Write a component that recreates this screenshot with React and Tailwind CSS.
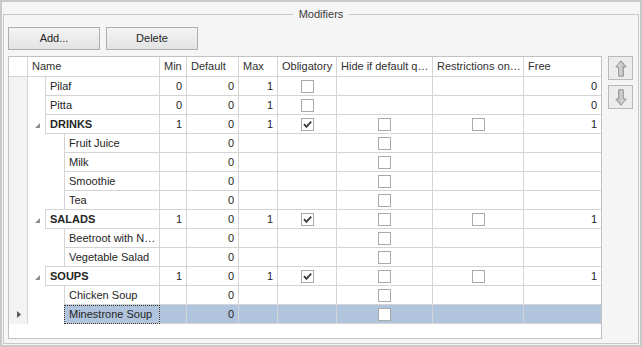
import React from 'react';

const COLS = [19, 132, 27, 52, 39, 59, 96, 91, 77];

const rows = [
  { name: 'Pilaf', level: 0, min: '0', def: '0', max: '1', obl: false, free: '0' },
  { name: 'Pitta', level: 0, min: '0', def: '0', max: '1', obl: false, free: '0' },
  { name: 'DRINKS', level: 0, group: true, min: '1', def: '0', max: '1', obl: true, hide: false, restr: false, free: '1' },
  { name: 'Fruit Juice', level: 1, def: '0', hide: false },
  { name: 'Milk', level: 1, def: '0', hide: false },
  { name: 'Smoothie', level: 1, def: '0', hide: false },
  { name: 'Tea', level: 1, def: '0', hide: false },
  { name: 'SALADS', level: 0, group: true, afterChild: true, min: '1', def: '0', max: '1', obl: true, hide: false, restr: false, free: '1' },
  { name: 'Beetroot with N\u2026', level: 1, def: '0', hide: false },
  { name: 'Vegetable Salad', level: 1, def: '0', hide: false },
  { name: 'SOUPS', level: 0, group: true, afterChild: true, min: '1', def: '0', max: '1', obl: true, hide: false, restr: false, free: '1' },
  { name: 'Chicken Soup', level: 1, def: '0', hide: false },
  { name: 'Minestrone Soup', level: 1, def: '0', hide: false, selected: true },
];

function Check({ checked }) {
  return (
    <span className="w-[13px] h-[13px] border border-[#a9a9a9] bg-white flex items-center justify-center">
      {checked && (
        <svg width="11" height="11" viewBox="0 0 11 11">
          <path d="M2 5.2 L4.4 7.8 L9.2 2.6" fill="none" stroke="#3c3c3c" strokeWidth="1.9" />
        </svg>
      )}
    </span>
  );
}

function Arrow({ down }) {
  return (
    <svg width="12" height="17" viewBox="0 0 12 17" className={down ? 'rotate-180' : ''}>
      <defs>
        <linearGradient id={down ? 'gd' : 'gu'} x1="0" y1="0" x2="1" y2="0">
          <stop offset="0" stopColor="#e4e4e4" />
          <stop offset="1" stopColor="#b4b4b4" />
        </linearGradient>
      </defs>
      <path
        d="M6 0.8 L11.2 7 L8.3 7 L8.3 16.2 L3.7 16.2 L3.7 7 L0.8 7 Z"
        fill={`url(#${down ? 'gd' : 'gu'})`}
        stroke="#8f8f8f"
        strokeWidth="1"
        strokeLinejoin="round"
      />
    </svg>
  );
}

function NumCell({ w, val, sel, last }) {
  return (
    <div
      className={`h-[19px] border-b border-[#d4d4d4] flex items-center justify-end pr-[4px] ${last ? '' : 'border-r'} ${sel ? 'bg-[#b0c4de]' : ''}`}
      style={{ width: w }}
    >
      {val}
    </div>
  );
}

function CheckCell({ w, val, sel }) {
  return (
    <div
      className={`h-[19px] border-b border-r border-[#d4d4d4] flex items-center justify-center ${sel ? 'bg-[#b0c4de]' : ''}`}
      style={{ width: w }}
    >
      {val !== undefined && <Check checked={val} />}
    </div>
  );
}

function Row({ r }) {
  const sel = r.selected;
  return (
    <div className="flex h-[19px]">
      <div className="w-[19px] h-[19px] border-r border-[#d4d4d4] bg-[#f3f3f3] flex items-center justify-center pl-[1px]">
        {sel && (
          <svg width="4" height="7" viewBox="0 0 4 7">
            <path d="M0 0 L4 3.5 L0 7 Z" fill="#5a5a5a" />
          </svg>
        )}
      </div>
      <div className="w-[132px] h-[19px] flex">
        <div className={`${r.level === 0 ? 'w-[17px]' : 'w-[36px]'} h-[19px] flex items-center pl-[7px] pt-[2px] bg-white`}>
          {r.group && (
            <svg width="5" height="5" viewBox="0 0 5 5">
              <path d="M5 0 L5 5 L0 5 Z" fill="#8c8c8c" />
            </svg>
          )}
        </div>
        <div
          className={`flex-1 h-[19px] border-l border-r border-b border-[#d4d4d4] flex items-center pl-[4px] whitespace-nowrap overflow-hidden ${r.group ? 'font-bold' : ''} ${r.afterChild ? 'shadow-[0_-1px_0_#d4d4d4]' : ''} ${sel ? 'bg-[#b0c4de] outline outline-1 outline-dotted outline-[#333333] -outline-offset-1' : ''}`}
        >
          {r.name}
        </div>
      </div>
      <NumCell w={27} val={r.min} sel={sel} />
      <NumCell w={52} val={r.def} sel={sel} />
      <NumCell w={39} val={r.max} sel={sel} />
      <CheckCell w={59} val={r.obl} sel={sel} />
      <CheckCell w={96} val={r.hide} sel={sel} />
      <CheckCell w={91} val={r.restr} sel={sel} />
      <NumCell w={77} val={r.free} sel={sel} last />
    </div>
  );
}

const headers = ['', 'Name', 'Min', 'Default', 'Max', 'Obligatory', 'Hide if default q\u2026', 'Restrictions on\u2026', 'Free'];

export default function App() {
  return (
    <div className="w-[642px] h-[347px] border-2 border-[#c9c9c9] bg-[#f5f5f5] p-[1px] pt-0 font-['Liberation_Sans',Arial,sans-serif] text-[11px] leading-[13px] text-[#252525]">
      <div className="relative mt-[12px] h-[330px] border border-[#c9c9c9] pl-[4px] pt-[12px]">
        <div className="absolute -top-[7px] left-1/2 -translate-x-1/2 bg-[#f5f5f5] px-[5px] text-[#3a3a3a]">
          Modifiers
        </div>
        <div className="flex gap-[6px]">
          <button className="w-[92px] h-[23px] border border-[#adadad] bg-gradient-to-b from-[#f4f4f4] to-[#e3e3e3] text-[#252525] text-[11px]">
            Add...
          </button>
          <button className="w-[92px] h-[23px] border border-[#adadad] bg-gradient-to-b from-[#f4f4f4] to-[#e3e3e3] text-[#252525] text-[11px]">
            Delete
          </button>
        </div>
        <div className="flex mt-[6px] gap-[6px]">
          <div className="w-[594px] h-[283px] border border-[#c2c2c2] bg-white flex flex-col">
            <div className="flex h-[20px]">
              {headers.map((h, i) => (
                <div
                  key={i}
                  className={`h-[20px] border-b border-[#d4d4d4] flex items-center pl-[4px] whitespace-nowrap overflow-hidden text-[#303030] ${i === headers.length - 1 ? '' : 'border-r'}`}
                  style={{ width: COLS[i] }}
                >
                  {h}
                </div>
              ))}
            </div>
            {rows.map((r, i) => (
              <Row key={i} r={r} />
            ))}
            <div className="flex-1" />
          </div>
          <div className="flex flex-col gap-[5px]">
            <div className="w-[25px] h-[24px] border border-[#b9b9b9] bg-[#ececec] flex items-center justify-center">
              <Arrow />
            </div>
            <div className="w-[25px] h-[24px] border border-[#b9b9b9] bg-[#ececec] flex items-center justify-center">
              <Arrow down />
            </div>
          </div>
        </div>
      </div>
    </div>
  );
}
